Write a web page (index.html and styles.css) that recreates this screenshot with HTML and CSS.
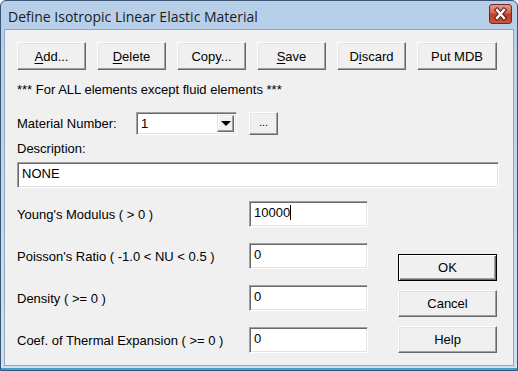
FILE: index.html
```html
<!DOCTYPE html>
<html lang="en">
<head>
  <meta charset="UTF-8" />
  <title>Define Isotropic Linear Elastic Material</title>
  <link rel="stylesheet" href="styles.css">
</head>
<body>
  <div class="window">
    <!-- Barra de titulo -->
    <div class="titlebar">
      <span class="title">Define Isotropic Linear Elastic Material</span>
      <div class="close" aria-label="Close">
        <svg width="23" height="20" viewBox="0 0 23 20">
          <path d="M8 6 L15 14 M15 6 L8 14" stroke="#4a1a16" stroke-width="4.4" stroke-linecap="square" />
          <path d="M8 6 L15 14 M15 6 L8 14" stroke="#ffffff" stroke-width="2.4" stroke-linecap="square" />
        </svg>
      </div>
    </div>

    <div class="client">
      <div class="toolbar">
        <div class="btn"><u>A</u>dd...</div>
        <div class="btn"><u>D</u>elete</div>
        <div class="btn">Copy...</div>
        <div class="btn"><u>S</u>ave</div>
        <div class="btn">D<u>i</u>scard</div>
        <div class="btn wide">Put MDB</div>
      </div>

      <p class="note">*** For ALL elements except fluid elements ***</p>

      <div class="material-row">
        <span class="material-label">Material Number:</span>
        <div class="combo">
          <span class="combo-value">1</span>
          <div class="combo-arrow"><span class="triangle"></span></div>
        </div>
        <div class="btn small">...</div>
      </div>

      <div class="desc-label">Description:</div>
      <div class="field desc">NONE</div>

      <div class="main">
        <div class="props">
          <div class="prop-row">
            <span class="prop-label">Young's Modulus ( &gt; 0 )</span>
            <div class="field num">10000<span class="caret"></span></div>
          </div>
          <div class="prop-row">
            <span class="prop-label">Poisson's Ratio ( -1.0 &lt; NU &lt; 0.5 )</span>
            <div class="field num">0</div>
          </div>
          <div class="prop-row">
            <span class="prop-label">Density ( &gt;= 0 )</span>
            <div class="field num">0</div>
          </div>
          <div class="prop-row">
            <span class="prop-label">Coef. of Thermal Expansion ( &gt;= 0 )</span>
            <div class="field num">0</div>
          </div>
        </div>
        <div class="actions">
          <div class="btn action default">OK</div>
          <div class="btn action">Cancel</div>
          <div class="btn action">Help</div>
        </div>
      </div>
    </div>
  </div>
</body>
</html>
```

FILE: styles.css
```css
body {
  margin: 0;
  font-family: 'Liberation Sans', Arial, sans-serif;
  font-size: 13px;
  color: #000000;
  background: #ffffff;
}
.window {
  width: 518px;
  height: 371px;
  box-sizing: border-box;
  border: 1px solid #3a5674;
  border-radius: 6px 6px 0 0;
  background: linear-gradient(#b6cee8, #cfe0f2);
  padding: 0 3px 4px 3px;
  display: flex;
  flex-direction: column;
  box-shadow: inset 0 -2px 0 #3f9fd3;
}
.titlebar {
  height: 28px;
  display: flex;
  align-items: center;
  padding-left: 4px;
  position: relative;
}
.title {
  font-family: 'Open Sans', 'Noto Sans', sans-serif;
  font-size: 14px;
  color: #1b1b1b;
  margin-top: 3px;
}
.close {
  position: absolute;
  right: 2px;
  top: 3px;
  width: 23px;
  height: 20px;
  box-sizing: border-box;
  border: 1px solid #6b2a25;
  border-radius: 3px;
  background: linear-gradient(#e49a88, #d2644f 45%, #bd3c24 52%, #c9553b);
  overflow: hidden;
}
.close svg {
  display: block;
  margin: -1px;
}
.client {
  flex: 1;
  background: #f0f0f0;
  border: 1px solid #8fa6be;
  padding: 12px 16px 0 12px;
}

/* Botones estilo clasico */
.btn {
  box-sizing: border-box;
  height: 28px;
  width: 69px;
  display: flex;
  align-items: center;
  justify-content: center;
  background: #f0f0f0;
  border: 1px solid;
  border-color: #ffffff #696969 #696969 #ffffff;
  box-shadow: inset -1px -1px 0 #a0a0a0, inset 1px 1px 0 #e3e3e3;
  user-select: none;
}
.btn u {
  text-decoration: underline;
  text-underline-offset: 2px;
}
.toolbar {
  display: flex;
  gap: 11px;
}
.btn.wide {
  width: 80px;
}
.note {
  margin: 12px 0 0 0;
  line-height: 16px;
}
.material-row {
  display: flex;
  align-items: center;
  margin-top: 14px;
}
.material-label {
  width: 119px;
}
.combo {
  box-sizing: border-box;
  width: 101px;
  height: 23px;
  background: #ffffff;
  border: 1px solid;
  border-color: #a0a0a0 #ffffff #ffffff #a0a0a0;
  box-shadow: inset 1px 1px 0 #696969, inset -1px -1px 0 #e3e3e3;
  display: flex;
  align-items: center;
  padding: 2px 2px 2px 4px;
}
.combo-value {
  flex: 1;
}
.combo-arrow {
  box-sizing: border-box;
  width: 17px;
  height: 17px;
  background: #f0f0f0;
  border: 1px solid;
  border-color: #e3e3e3 #696969 #696969 #e3e3e3;
  box-shadow: inset -1px -1px 0 #a0a0a0, inset 1px 1px 0 #ffffff;
  display: flex;
  align-items: center;
  justify-content: center;
}
.triangle {
  width: 0;
  height: 0;
  border-left: 5px solid transparent;
  border-right: 5px solid transparent;
  border-top: 5px solid #000000;
}
.btn.small {
  width: 29px;
  height: 23px;
  margin-left: 12px;
  font-size: 11px;
  padding-bottom: 4px;
}
.desc-label {
  margin-top: 6px;
  line-height: 16px;
}
.field {
  box-sizing: border-box;
  background: #ffffff;
  border: 1px solid;
  border-color: #a0a0a0 #ffffff #ffffff #a0a0a0;
  box-shadow: inset 1px 1px 0 #696969, inset -1px -1px 0 #e3e3e3;
  padding: 3px 4px;
  line-height: 16px;
}
.desc {
  margin-top: 5px;
  width: 482px;
  height: 26px;
}
.main {
  display: flex;
  margin-top: 13px;
}
.props {
  display: flex;
  flex-direction: column;
  gap: 16px;
}
.prop-row {
  display: flex;
  align-items: center;
}
.prop-label {
  width: 232px;
}
.num {
  width: 119px;
  height: 26px;
}
.caret {
  display: inline-block;
  width: 1px;
  height: 15px;
  background: #000000;
  vertical-align: top;
}
.actions {
  margin-left: auto;
  align-self: flex-end;
  display: flex;
  flex-direction: column;
  gap: 9px;
}
.btn.action {
  width: 99px;
  height: 27px;
}
.btn.default {
  border: 1px solid #000000;
  box-shadow: inset 1px 1px 0 #ffffff, inset -1px -1px 0 #696969, inset -2px -2px 0 #a0a0a0;
}
```
